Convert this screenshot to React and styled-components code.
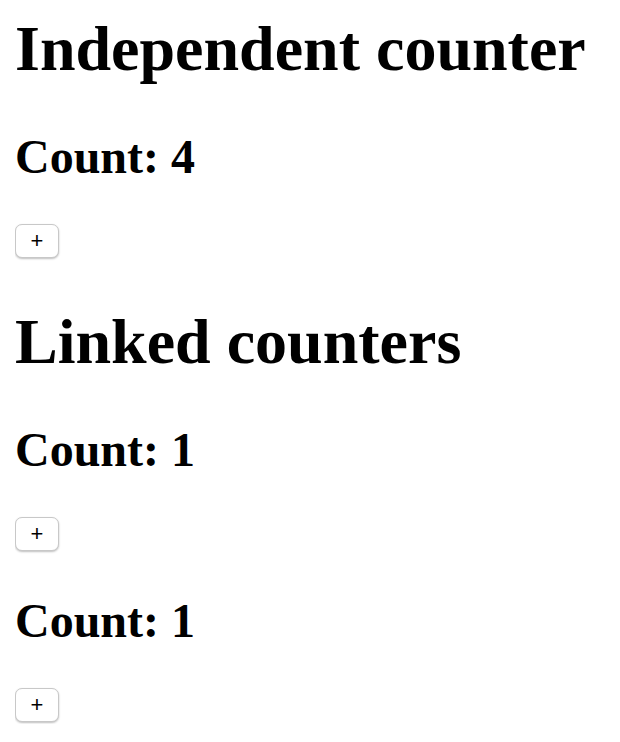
import React, { useState } from 'react';
import styled, { createGlobalStyle } from 'styled-components';

const GlobalStyle = createGlobalStyle`
  body {
    margin: 12px 15px 16px;
    background: #fff;
    color: #000;
    font-family: "Liberation Serif", "Times New Roman", serif;
    font-size: 32px;
  }
`;

const Counter = ({ count, onIncrement }) => {
  return (
    <div>
      <Count>Count: {count}</Count>
      <ButtonRow>
        <PlusButton onClick={onIncrement}>+</PlusButton>
      </ButtonRow>
    </div>
  );
};

const App = () => {
  const [single, setSingle] = useState(4);
  const [linked, setLinked] = useState(1);

  return (
    <Wrapper>
      <GlobalStyle />
      <Heading $first>Independent counter</Heading>
      <Counter count={single} onIncrement={() => setSingle(single + 1)} />
      <Heading>Linked counters</Heading>
      <Counter count={linked} onIncrement={() => setLinked(linked + 1)} />
      <Counter count={linked} onIncrement={() => setLinked(linked + 1)} />
    </Wrapper>
  );
};

const Wrapper = styled.main`
  display: block;
`;

const Heading = styled.h1`
  font-size: 64px;
  font-weight: 700;
  line-height: normal;
  margin: ${(p) => (p.$first ? '0' : '45px')} 0 43px;
`;

const Count = styled.h2`
  font-size: 48px;
  font-weight: 700;
  line-height: normal;
  margin: 40px 0;
`;

const ButtonRow = styled.div`
  display: flex;
  padding-bottom: 2px;
`;

const PlusButton = styled.button`
  width: 44px;
  height: 34px;
  padding: 0;
  background: #fff;
  border: 1px solid #c8c8c8;
  border-radius: 7px;
  box-shadow: 0 1px 2px rgba(0, 0, 0, 0.25);
  font-family: "Liberation Sans", Arial, sans-serif;
  font-size: 22px;
  color: #000;
  cursor: pointer;
`;

export default App;
